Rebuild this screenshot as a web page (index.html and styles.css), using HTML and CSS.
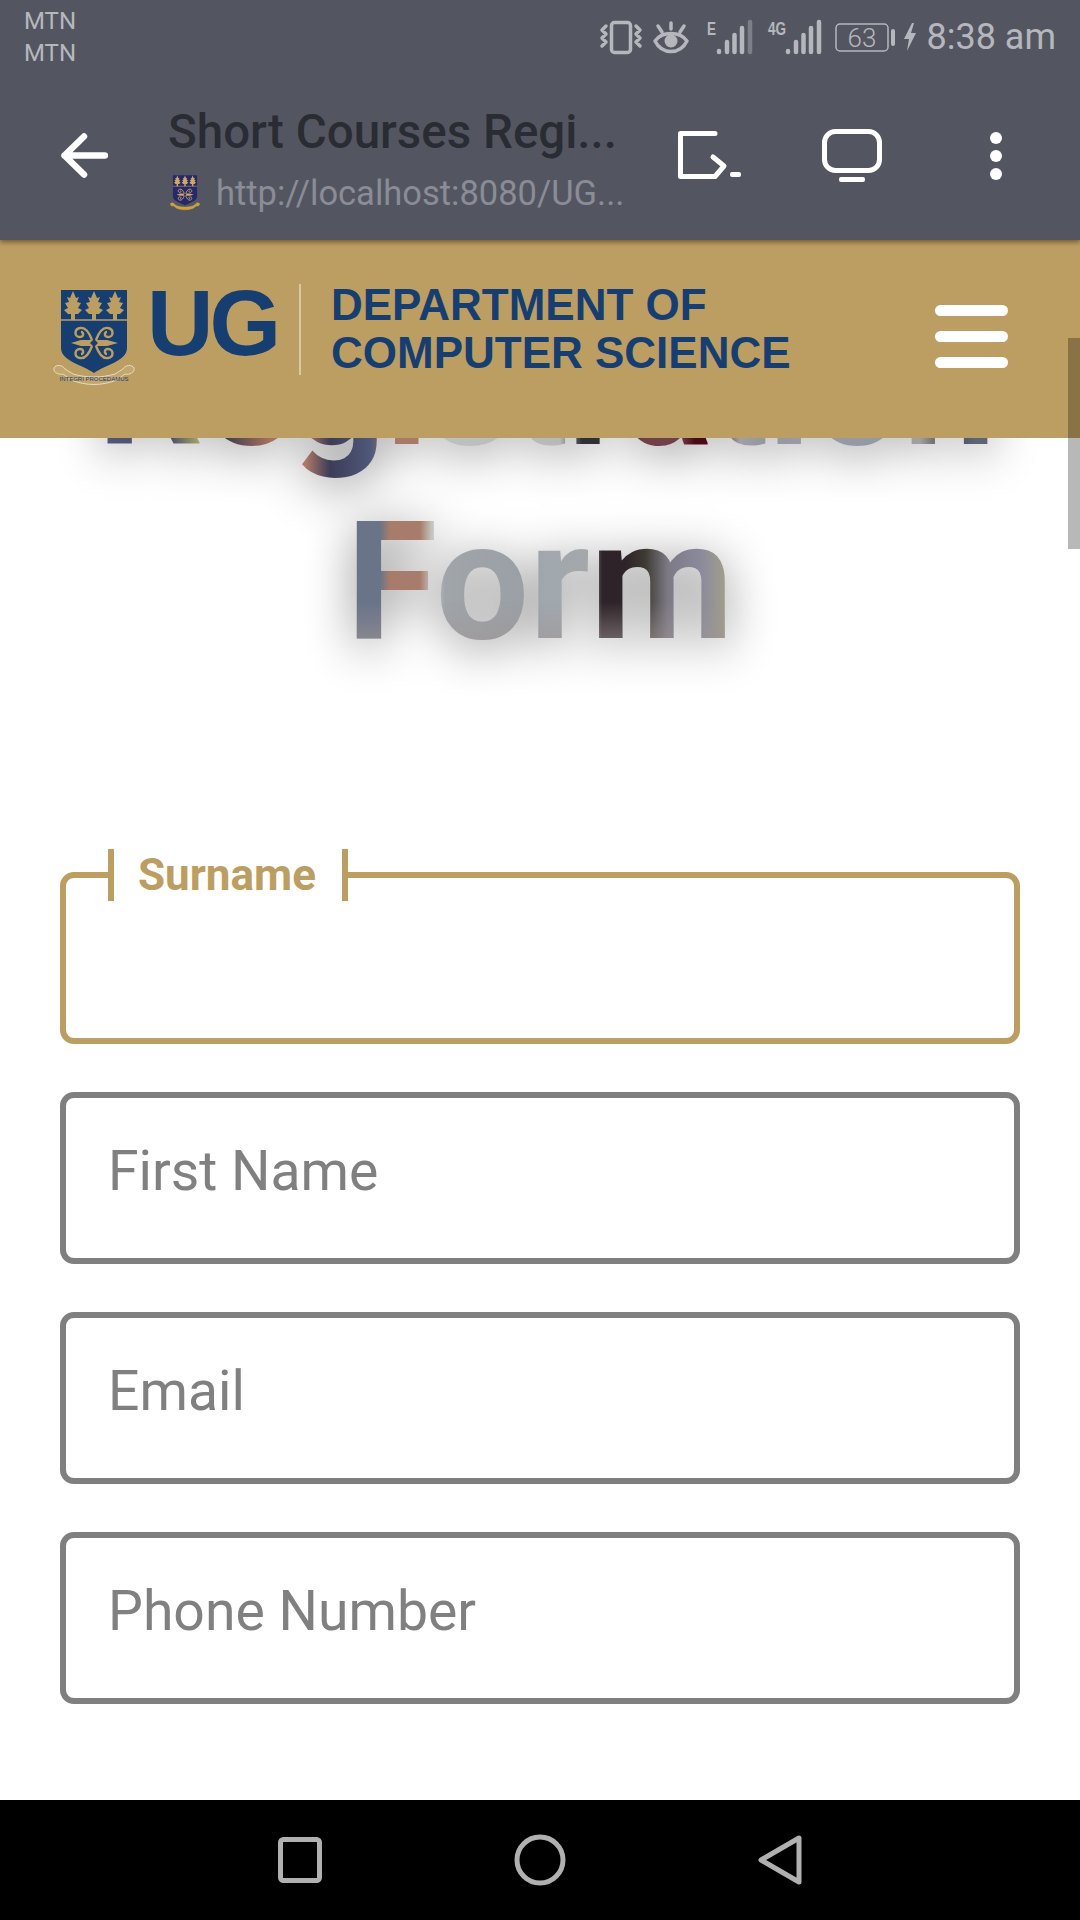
FILE: index.html
```html
<!DOCTYPE html>
<html lang="en">
<head>
<meta charset="UTF-8">
<title>Short Courses Registration Form</title>
<link rel="stylesheet" href="styles.css">
</head>
<body>

<svg class="defs" width="0" height="0">
  <symbol id="crest" viewBox="0 0 82 97">
    <path class="shield" d="M8 0H74V58C74 71 52 75 41 83C30 75 8 71 8 58Z"/>
    <path class="gold-line" d="M8 30H74" stroke-width="1.5"/>
    <g class="gold">
      <path d="M20 1L23 8L26 7L24 12L28 13L25 18L29 20L25 24L22 24L22 30H18L18 24L15 24L11 20L15 18L12 13L16 12L14 7L17 8Z"/>
      <path d="M41 1L44 8L47 7L45 12L49 13L46 18L50 20L46 24L43 24L43 30H39L39 24L36 24L32 20L36 18L33 13L37 12L35 7L38 8Z"/>
      <path d="M62 1L65 8L68 7L66 12L70 13L67 18L71 20L67 24L64 24L64 30H60L60 24L57 24L53 20L57 18L54 13L58 12L56 7L59 8Z"/>
      <path d="M18 53L28 50H54L65 53L54 56H28Z"/>
    </g>
    <g class="gold-line" stroke-width="2.4">
      <path d="M39 50C36 42 32 37 27 38C21 39 21 47 27 47C31 47 31 42 28 42"/>
      <path d="M43 50C46 42 50 37 55 38C61 39 61 47 55 47C51 47 51 42 54 42"/>
      <path d="M39 56C36 64 32 69 27 68C21 67 21 59 27 59C31 59 31 64 28 64"/>
      <path d="M43 56C46 64 50 69 55 68C61 67 61 59 55 59C51 59 51 64 54 64"/>
    </g>
    <path class="shield" d="M41 49L45 53L41 57L37 53Z"/>
    <path class="ribbon" d="M1 78C3 74 10 75 12 79L20 84C34 88 48 88 62 84L70 79C72 75 79 74 81 78C82 83 76 85 72 84L64 90C48 96 34 96 18 90L10 84C6 85 0 83 1 78Z"/>
  </symbol>
</svg>

<div class="topbar">
  <div class="statusbar">
    <div class="carrier">MTN<br>MTN</div>
    <div class="status-icons">
      <svg class="ic-vibrate" width="42" height="33" viewBox="0 0 42 33">
        <rect x="11.500" y="1.500" width="19" height="30" rx="3"/>
        <path d="M6 5L2 9L6 13L2 17L6 21L2 25M36 5L40 9L36 13L40 17L36 21L40 25"/>
      </svg>
      <svg class="ic-eye" width="36" height="31" viewBox="0 0 36 31">
        <path d="M2 19C9 9 27 9 34 19C27 33 9 33 2 19ZM18 1V7M5 4L9 10M31 4L27 10"/>
        <circle class="solid" cx="18" cy="19" r="6.500"/>
      </svg>
      <svg class="ic-signal ic-signal-e" width="45" height="33" viewBox="0 0 45 33">
        <text class="net" x="0" y="14" textLength="9" lengthAdjust="spacingAndGlyphs">E</text>
        <path d="M12 31V30M20 31V21M27.500 31V14M35 31V7"/>
        <path class="dim" d="M43 31V1"/>
      </svg>
      <svg class="ic-signal ic-signal-4g" width="53" height="33" viewBox="0 0 53 33">
        <text class="net" x="0" y="14" textLength="18" lengthAdjust="spacingAndGlyphs">4G</text>
        <path d="M20 31V30M28 31V21M35.500 31V14M43 31V7M51 31V1"/>
      </svg>
      <svg class="ic-battery" width="60" height="29" viewBox="0 0 60 29">
        <rect class="thin" x="1" y="1" width="52" height="27" rx="4"/>
        <text class="batt" x="27" y="24">63</text>
        <rect class="solid" x="56" y="6" width="4" height="17" rx="2"/>
      </svg>
      <svg class="ic-bolt" width="14" height="28" viewBox="0 0 12 28">
        <path class="solid" d="M8 0L0 16H5L3 28L12 10H7L10 0Z"/>
      </svg>
      <span class="clock">8:38 am</span>
    </div>
  </div>

  <div class="appbar">
    <svg class="ic-white back" width="47" height="45" viewBox="0 0 47 45">
      <path d="M23 3.500L3.500 22.500L23 41.500M3.500 22.500H44"/>
    </svg>
    <div class="tab-info">
      <div class="tab-title">Short Courses Regi...</div>
      <div class="tab-url">
        <svg class="favicon" width="30" height="36"><use href="#crest"/></svg>
        <span>http://localhost:8080/UG...</span>
      </div>
    </div>
    <svg class="ic-white cast" width="64" height="48" viewBox="0 0 64 48">
      <path d="M37 2.500H2.500V45.500H37L46 35L35 26"/>
      <rect class="fill-white" x="52" y="41" width="11" height="5" rx="2"/>
    </svg>
    <svg class="ic-white tv" width="60" height="53" viewBox="0 0 60 53">
      <rect x="2.500" y="2.500" width="55" height="39" rx="11"/>
      <rect class="fill-white" x="17" y="48" width="26" height="5" rx="2"/>
    </svg>
    <div class="menu-dots"><i></i><i></i><i></i></div>
  </div>
</div>

<header class="site-header">
  <svg class="logo-crest" width="82" height="97" viewBox="0 0 82 97">
    <use href="#crest"/>
    <text class="motto" x="41" y="91">INTEGRI PROCEDAMUS</text>
  </svg>
  <span class="logo-ug">UG</span>
  <span class="logo-rule"></span>
  <div class="logo-dept">DEPARTMENT OF<br>COMPUTER SCIENCE</div>
  <div class="burger"><i></i><i></i><i></i></div>
</header>

<main>
  <h1><span class="line-one">Registration</span> <span class="line-two">Form</span></h1>

  <form class="reg-form">
    <fieldset class="field field-active">
      <legend>Surname</legend>
    </fieldset>
    <div class="field"><span>First Name</span></div>
    <div class="field"><span>Email</span></div>
    <div class="field"><span>Phone Number</span></div>
  </form>
</main>

<nav class="navbar">
  <svg width="48" height="50" viewBox="0 0 48 50"><rect x="4.500" y="4.500" width="39" height="41" rx="3"/></svg>
  <svg width="54" height="54" viewBox="0 0 54 54"><circle cx="27" cy="27" r="23"/></svg>
  <svg width="48" height="54" viewBox="0 0 48 54"><path d="M43 5V49L5 27Z"/></svg>
</nav>

<div class="scroll-thumb"></div>

</body>
</html>
```

FILE: styles.css
```css
body {
  font-family: Roboto, sans-serif;
  background-color: #fff;
  margin: 0;
  padding: 0;
  width: 1080px;
  height: 1920px;
  display: flex;
  flex-direction: column;
  overflow: hidden;
  position: relative;
}

.defs {
  position: absolute;
}

/* crest colours, set per use */
.shield {
  fill: var(--shield, #163e70);
}

.gold {
  fill: var(--crest-gold, #bd9e62);
}

.gold-line {
  fill: none;
  stroke: var(--crest-gold, #bd9e62);
}

.ribbon {
  fill: var(--ribbon, #c4a76e);
  stroke: var(--ribbon-line, #e6dcc0);
  stroke-width: 1;
}

.topbar {
  background-color: #535661;
  height: 240px;
  flex-shrink: 0;
  position: relative;
  z-index: 3;
  box-shadow: 0 2px 5px rgba(0,0,0,0.45);
}

.statusbar {
  height: 70px;
  display: flex;
  justify-content: space-between;
  color: #b6b7bd;
}

.carrier {
  font-size: 24px;
  line-height: 32px;
  padding: 5px 0 0 24px;
}

.status-icons {
  display: flex;
  align-items: center;
  padding: 0 24px 0 0;
  height: 74px;
}

.status-icons svg {
  fill: none;
  stroke: #b6b7bd;
  stroke-width: 3.5;
  stroke-linecap: round;
  stroke-linejoin: round;
  overflow: visible;
}

.status-icons .solid {
  fill: #b6b7bd;
  stroke: none;
}

.status-icons .thin {
  stroke-width: 1.5;
}

.status-icons .ic-signal {
  stroke-width: 4.5;
}

.ic-signal .dim {
  stroke: #7c7e88;
}

.net {
  font-family: "Liberation Sans", sans-serif;
  font-weight: 700;
  font-size: 18px;
  fill: #b6b7bd;
  stroke: none;
}

.batt {
  font-size: 26px;
  font-weight: 300;
  text-anchor: middle;
  fill: #b6b7bd;
  stroke: none;
}

.ic-vibrate { margin-right: 11px; }
.ic-eye { margin-right: 18px; }
.ic-signal-e { margin-right: 16px; }
.ic-signal-4g { margin-right: 14px; }
.ic-battery { margin-right: 8px; }
.ic-bolt { margin-right: 10px; }

.clock {
  font-size: 36px;
  color: #b6b7bd;
}

.appbar {
  height: 170px;
  display: flex;
  align-items: center;
  padding-left: 61px;
}

.ic-white {
  fill: none;
  stroke: #fff;
  stroke-width: 5;
  stroke-linecap: round;
  stroke-linejoin: round;
  flex-shrink: 0;
}

.ic-white .fill-white {
  fill: #fff;
  stroke: none;
}

.back {
  stroke-width: 6.5;
}

.tab-info {
  margin-left: 60px;
  width: 461px;
}

.tab-title {
  font-size: 47.5px;
  font-weight: 500;
  color: #2a2c33;
  line-height: 54px;
  white-space: nowrap;
  padding-top: 10px;
}

.tab-url {
  display: flex;
  align-items: center;
  font-size: 34.5px;
  color: #8a8c96;
  line-height: 46px;
  white-space: nowrap;
  margin-top: 11px;
}

.favicon {
  --shield: #25286b;
  --crest-gold: #d0a860;
  --ribbon: #d0a040;
  --ribbon-line: #d0a040;
  flex-shrink: 0;
  margin: 0 16px 0 2px;
}

.cast {
  margin-left: 49px;
}

.tv {
  margin-left: 80px;
}

.menu-dots {
  margin: 2px 0 0 108px;
  display: flex;
  flex-direction: column;
  gap: 6px;
}

.menu-dots i {
  display: block;
  width: 12px;
  height: 12px;
  border-radius: 50%;
  background: #fff;
}

.site-header {
  background-color: #bd9e62;
  height: 198px;
  flex-shrink: 0;
  display: flex;
  align-items: center;
  padding: 0 72px 0 53px;
  position: relative;
  z-index: 2;
}

.logo-crest {
  margin-bottom: 2px;
  overflow: visible;
}

.motto {
  font-family: "Liberation Sans", sans-serif;
  font-size: 6px;
  text-anchor: middle;
  fill: #163e70;
}

.logo-ug {
  font-family: "Liberation Sans", sans-serif;
  font-weight: 700;
  font-size: 92px;
  letter-spacing: -4px;
  color: #163e70;
  margin: 0 0 33px 12px;
  line-height: 1;
}

.logo-rule {
  width: 2px;
  height: 91px;
  background: #d9c9a2;
  margin: 0 0 20px 22px;
}

.logo-dept {
  font-family: "Liberation Sans", sans-serif;
  font-weight: 700;
  font-size: 44px;
  line-height: 48px;
  color: #163e70;
  margin: 0 0 20px 30px;
}

.burger {
  margin: 0 0 5px auto;
  display: flex;
  flex-direction: column;
  gap: 15px;
}

.burger i {
  display: block;
  width: 73px;
  height: 11px;
  border-radius: 6px;
  background: #fff;
}

main {
  flex: 1;
  min-height: 0;
  overflow: hidden;
}

h1 {
  margin: -147px 0 0;
  font-size: 166px;
  font-weight: 700;
  line-height: 194px;
  text-align: center;
  color: transparent;
  filter: drop-shadow(0 8px 24px rgba(0,0,0,0.45));
}

.line-one,
.line-two {
  display: block;
  -webkit-background-clip: text;
  background-clip: text;
}

.line-one {
  letter-spacing: -1px;
  padding-left: 12px;
  background-image: linear-gradient(to right,
    #4f5878 105px, #4a4a68 170px, #a0a070 198px, #3a3a50 223px, #a87060 270px,
    #b07a68 305px, #3c3c58 330px, #4f5878 370px, #a87868 397px, #a87868 420px,
    #bfc0c0 443px, #b8b8b8 560px, #2f2f35 582px, #2f2f35 603px, #70404a 645px,
    #70404a 680px, #4a0a18 695px, #4a0a18 712px, #a0a0a8 740px, #8f98a0 765px,
    #9a9aa5 800px, #909aa5 880px, #a0a0a2 920px, #444a50 945px, #5a6575 975px);
}

.line-two {
  background-image:
    linear-gradient(to bottom, transparent 60%, rgba(160,150,150,0.55) 80%),
    linear-gradient(to right,
      #6a7488 360px, #6a7488 380px, #a87c6a 390px, #a87c6a 420px, #c4c6c2 432px,
      #a0a5aa 445px, #9aa0a5 520px, #a0a8ae 545px, #a5a7aa 590px, #2e2328 602px,
      #2e2328 625px, #3d3a33 645px, #7d7a86 668px, #8a8a9c 700px, #a09e8a 725px);
}

.reg-form {
  padding: 170px 60px 0;
  display: flex;
  flex-direction: column;
  gap: 48px;
}

.field {
  box-sizing: border-box;
  height: 172px;
  margin: 0;
  padding: 0 0 14px 42px;
  border: 6px solid #7f7f7f;
  border-radius: 14px;
  display: flex;
  align-items: center;
  font-size: 55.3px;
  color: #808080;
}

.field-active {
  display: block;
  height: 195px;
  padding: 0;
  border-color: #bd9e62;
}

legend {
  margin-left: 42px;
  padding: 0 26px 0 24px;
  height: 52px;
  line-height: 52px;
  box-sizing: border-box;
  border-left: 6px solid #bd9e62;
  border-right: 6px solid #bd9e62;
  font-size: 44px;
  font-weight: 700;
  color: #bd9e62;
}

.navbar {
  height: 120px;
  flex-shrink: 0;
  background: #000;
  display: flex;
  justify-content: center;
  align-items: center;
  gap: 189px;
}

.navbar svg {
  fill: none;
  stroke: #b0b0b0;
  stroke-width: 5;
  stroke-linejoin: round;
}

.scroll-thumb {
  position: absolute;
  top: 338px;
  right: 0;
  width: 12px;
  height: 211px;
  background: rgba(0,0,0,0.28);
  z-index: 4;
}
```
